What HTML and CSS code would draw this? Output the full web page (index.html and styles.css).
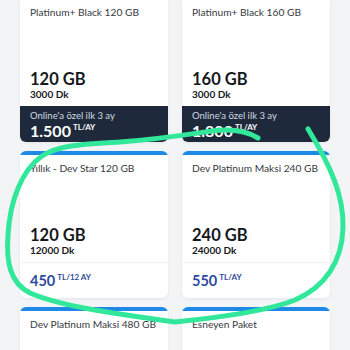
FILE: index.html
```html
<!DOCTYPE html>
<html lang="tr">
<head>
<meta charset="utf-8">
<title>Paketler</title>
<link rel="stylesheet" href="styles.css">
</head>
<body>
<div class="page">
  <div class="grid">
    <div class="card">
      <div class="bar"></div>
      <div class="title">Platinum+ Black 120 GB</div>
      <div class="specs">
        <div class="gb">120 GB</div>
        <div class="dk">3000 Dk</div>
      </div>
      <div class="footer dark">
        <div class="promo">Online'a özel ilk 3 ay</div>
        <div class="price"><span class="amount">1.500</span><span class="unit">TL/AY</span></div>
      </div>
    </div>
    <div class="card">
      <div class="bar"></div>
      <div class="title">Platinum+ Black 160 GB</div>
      <div class="specs">
        <div class="gb">160 GB</div>
        <div class="dk">3000 Dk</div>
      </div>
      <div class="footer dark">
        <div class="promo">Online'a özel ilk 3 ay</div>
        <div class="price"><span class="amount">1.800</span><span class="unit">TL/AY</span></div>
      </div>
    </div>
    <div class="card">
      <div class="bar"></div>
      <div class="title">Yıllık - Dev Star 120 GB</div>
      <div class="specs">
        <div class="gb">120 GB</div>
        <div class="dk">12000 Dk</div>
      </div>
      <div class="footer light">
        <div class="price"><span class="amount">450</span><span class="unit">TL/12 AY</span></div>
      </div>
    </div>
    <div class="card">
      <div class="bar"></div>
      <div class="title">Dev Platinum Maksi 240 GB</div>
      <div class="specs">
        <div class="gb">240 GB</div>
        <div class="dk">24000 Dk</div>
      </div>
      <div class="footer light">
        <div class="price"><span class="amount">550</span><span class="unit">TL/AY</span></div>
      </div>
    </div>
    <div class="card">
      <div class="bar"></div>
      <div class="title">Dev Platinum Maksi 480 GB</div>
    </div>
    <div class="card">
      <div class="bar"></div>
      <div class="title">Esneyen Paket</div>
    </div>
  </div>
  <svg class="scribble" width="350" height="350" viewBox="0 0 350 350">
    <path d="M258 138 C 245 130, 228 128, 205 132 C 185 135, 160 139, 120 142 C 90 144, 60 144, 42 156 C 22 170, 10 200, 8 235 C 6 262, 10 283, 30 293 C 60 306, 110 313, 175 322 C 215 318, 265 312, 295 300 C 325 287, 342 262, 343 228 C 344 195, 330 165, 308 129" fill="none" stroke="#31e79a" stroke-width="5" stroke-linecap="round" stroke-linejoin="round"/>
  </svg>
</div>
</body>
</html>
```
FILE: styles.css
```css
* { box-sizing: border-box; }
html, body { margin: 0; padding: 0; }
body {
  width: 350px;
  height: 350px;
  overflow: hidden;
  background: #f3f4f6;
  font-family: Lato, "Noto Sans", sans-serif;
  color: #2b2f36;
}
.page {
  position: relative;
  width: 350px;
  height: 350px;
  overflow: hidden;
}
.grid {
  display: grid;
  grid-template-columns: 148px 148px;
  grid-auto-rows: 147px;
  column-gap: 14px;
  row-gap: 9px;
  padding: 0 20px;
  margin-top: -5px;
}
.card {
  background: #fff;
  border-radius: 6px;
  overflow: hidden;
  display: flex;
  flex-direction: column;
  box-shadow: 0 1px 3px rgba(20, 30, 50, 0.07);
}
.bar {
  height: 4px;
  flex: none;
  background: #1f8ae6;
}
.title {
  padding: 7px 10px 0;
  font-size: 10.2px;
  line-height: 12px;
  color: #363a41;
  white-space: nowrap;
}
.specs {
  margin-top: auto;
  padding: 0 10px 6px;
}
.gb {
  font-size: 16.5px;
  line-height: 18px;
  font-weight: 700;
  color: #15181d;
}
.dk {
  font-size: 10px;
  line-height: 12px;
  font-weight: 700;
  color: #15181d;
}
.footer {
  height: 36px;
  flex: none;
  padding: 0 10px;
  display: flex;
  flex-direction: column;
}
.footer.dark {
  background: #1e2a3b;
  color: #fff;
  padding-top: 4px;
}
.footer.light {
  border-top: 1px solid #eef0f3;
  color: #2d4b9d;
  justify-content: center;
}
.promo {
  font-size: 9.5px;
  line-height: 12px;
  color: #d3d8e0;
}
.price {
  display: flex;
  align-items: flex-start;
  line-height: 1;
}
.amount {
  font-size: 16px;
  font-weight: 700;
  line-height: 17px;
}
.footer.light .amount {
  font-size: 14.5px;
}
.unit {
  font-size: 8px;
  font-weight: 700;
  margin-left: 2px;
  margin-top: 1px;
}
.scribble {
  position: absolute;
  left: 0;
  top: 0;
  pointer-events: none;
}
```
